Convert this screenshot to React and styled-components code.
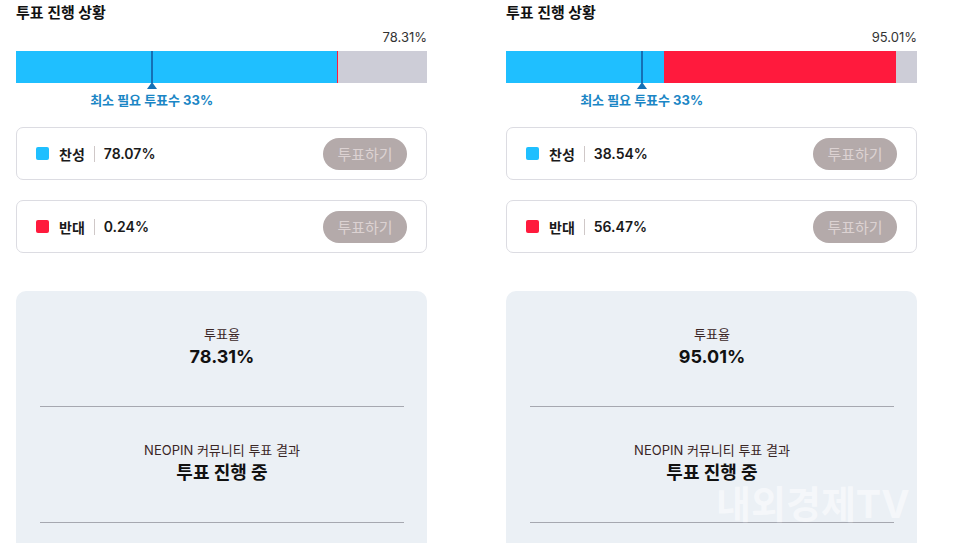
import React from "react";
import styled, { createGlobalStyle } from "styled-components";

const Global = createGlobalStyle`
  html, body { margin: 0; padding: 0; background: #fff; }
  body { font-family: Inter, "Noto Sans CJK KR", "Noto Sans", sans-serif; overflow: hidden; }
`;

const Page = styled.div`
  position: relative;
  display: flex;
  gap: 79px;
  padding-left: 16px;
  width: 960px;
  height: 543px;
  box-sizing: border-box;
  overflow: hidden;
`;

const Panel = styled.section`
  width: 411px;
  display: flex;
  flex-direction: column;
`;

const Title = styled.h2`
  margin: 3px 0 0;
  font-size: 15px;
  line-height: 20px;
  font-weight: 700;
  color: #111;
`;

const Total = styled.div`
  margin-top: 6px;
  text-align: right;
  font-size: 13px;
  line-height: 16px;
  color: #333;
`;

const BarWrap = styled.div`
  position: relative;
  margin-top: 6px;
  height: 32px;
`;

const Bar = styled.div`
  display: flex;
  height: 32px;
  background: #cdcdd7;
`;

const Segment = styled.div`
  height: 100%;
  background: ${(p) => p.$color};
`;

const Marker = styled.div`
  position: absolute;
  top: 0;
  width: 2px;
  margin-left: -1px;
  height: 32px;
  background: #1570b5;
  &::after {
    content: "";
    position: absolute;
    left: -4px;
    top: 31px;
    border-left: 5px solid transparent;
    border-right: 5px solid transparent;
    border-bottom: 7px solid #1570b5;
  }
`;

const MarkerLabel = styled.div`
  position: absolute;
  top: 41px;
  transform: translateX(-50%);
  white-space: nowrap;
  font-size: 13px;
  line-height: 16px;
  font-weight: 700;
  color: #1b86c5;
`;

const Cards = styled.div`
  margin-top: 44px;
  display: flex;
  flex-direction: column;
  gap: 20px;
`;

const Card = styled.div`
  height: 53px;
  box-sizing: border-box;
  border: 1px solid #dcdce2;
  border-radius: 7px;
  display: flex;
  align-items: center;
  padding: 0 19px;
`;

const Swatch = styled.span`
  width: 13px;
  height: 13px;
  border-radius: 2px;
  background: ${(p) => p.$color};
  margin-right: 10px;
`;

const OptLabel = styled.span`
  font-size: 14px;
  font-weight: 700;
  color: #1a1a1a;
`;

const Sep = styled.span`
  width: 1px;
  height: 16px;
  background: #cfc8c8;
  margin: 0 9px;
`;

const OptValue = styled.span`
  font-size: 14px;
  font-weight: 600;
  color: #1a1a1a;
  flex: 1;
`;

const VoteButton = styled.button`
  width: 84px;
  height: 32px;
  border: none;
  border-radius: 16px;
  background: #b4aaaa;
  color: #dcd2d2;
  font-family: inherit;
  font-size: 15px;
  padding: 0;
`;

const Summary = styled.div`
  margin-top: 38px;
  background: #ebf0f5;
  border-radius: 10px 10px 0 0;
  padding: 0 23px 0 24px;
  flex: 1;
`;

const Stat = styled.div`
  padding: 34px 0 37px;
  text-align: center;
  border-bottom: 1px solid #a6a8b0;
`;

const StatLabel = styled.div`
  font-size: 13px;
  line-height: 18px;
  color: #3a2626;
`;

const StatValue = styled.div`
  margin-top: 2px;
  font-size: 18px;
  line-height: 24px;
  font-weight: 700;
  color: #111;
`;

const Watermark = styled.div`
  position: absolute;
  left: 716px;
  top: 482px;
  font-size: 38px;
  font-weight: 700;
  line-height: 44px;
  color: rgba(255, 255, 255, 0.5);
  white-space: nowrap;
  pointer-events: none;
`;

const data = [
  { total: "78.31%", yes: 78.07, no: 0.24 },
  { total: "95.01%", yes: 38.54, no: 56.47 },
];

function VotePanel({ d }) {
  return (
    <Panel>
      <Title>투표 진행 상황</Title>
      <Total>{d.total}</Total>
      <BarWrap>
        <Bar>
          <Segment $color="#1fbfff" style={{ width: `${d.yes}%` }} />
          <Segment $color="#ff1a3d" style={{ width: `${d.no}%` }} />
        </Bar>
        <Marker style={{ left: "33%" }} />
        <MarkerLabel style={{ left: "33%" }}>최소 필요 투표수 33%</MarkerLabel>
      </BarWrap>
      <Cards>
        <Card>
          <Swatch $color="#1fbfff" />
          <OptLabel>찬성</OptLabel>
          <Sep />
          <OptValue>{d.yes.toFixed(2)}%</OptValue>
          <VoteButton>투표하기</VoteButton>
        </Card>
        <Card>
          <Swatch $color="#ff1a3d" />
          <OptLabel>반대</OptLabel>
          <Sep />
          <OptValue>{d.no.toFixed(2)}%</OptValue>
          <VoteButton>투표하기</VoteButton>
        </Card>
      </Cards>
      <Summary>
        <Stat>
          <StatLabel>투표율</StatLabel>
          <StatValue>{d.total}</StatValue>
        </Stat>
        <Stat>
          <StatLabel>NEOPIN 커뮤니티 투표 결과</StatLabel>
          <StatValue>투표 진행 중</StatValue>
        </Stat>
      </Summary>
    </Panel>
  );
}

export default function App() {
  return (
    <>
      <Global />
      <Page>
        {data.map((d, i) => (
          <VotePanel key={i} d={d} />
        ))}
        <Watermark>내외경제TV</Watermark>
      </Page>
    </>
  );
}
